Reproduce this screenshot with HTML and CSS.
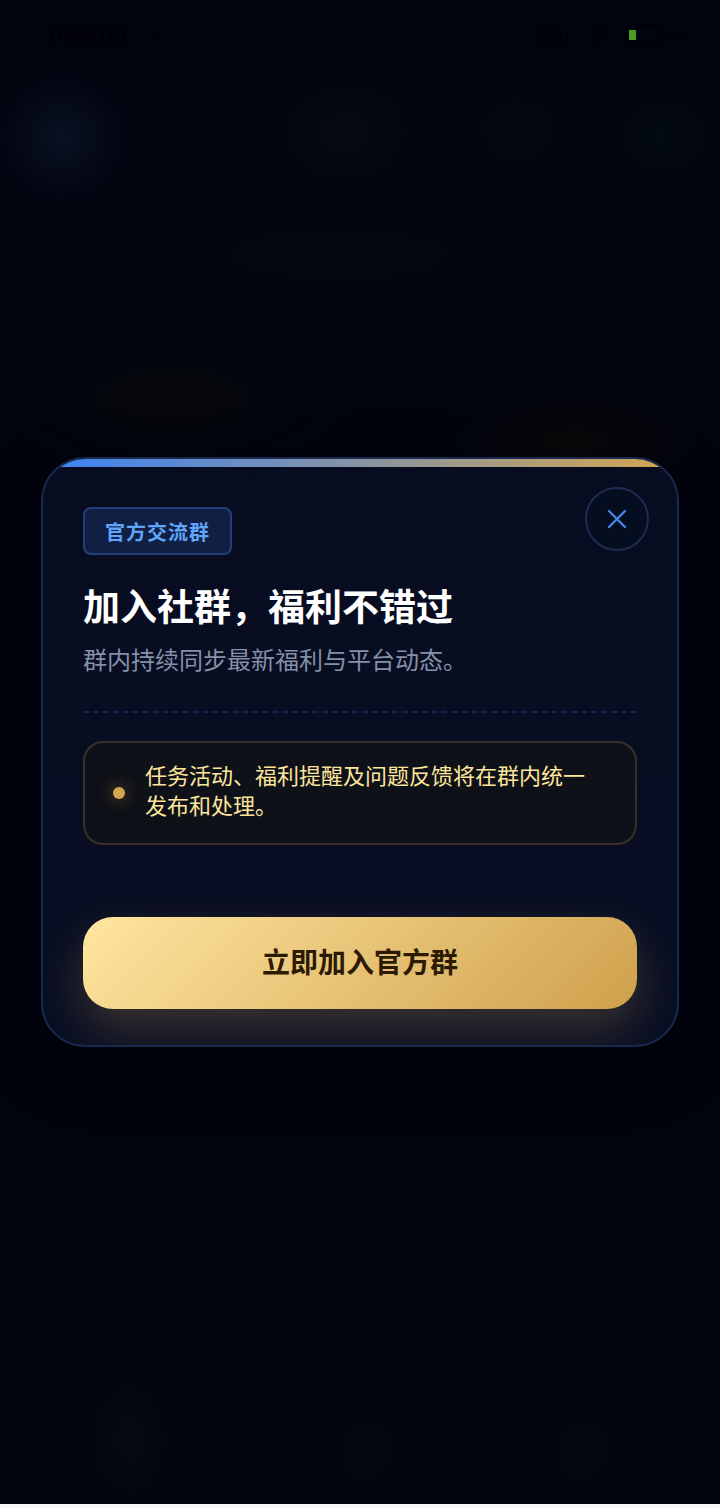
FILE: index.html
```html
<!DOCTYPE html>
<html lang="zh-CN">
<head>
  <meta charset="UTF-8" />
  <meta name="viewport" content="width=device-width, initial-scale=1.0" />
  <title>官方交流群</title>
  <link rel="stylesheet" href="styles.css">
</head>
<body>

  <div class="overlay">
    <header class="status-bar" aria-hidden="true">
      <svg class="status-left" width="116" height="24" viewBox="0 0 116 24">
        <path d="M0 2h78v4H0zM3 8h3v15H3zM11 8h3v12h-3zM18 10h28v10H18zM52 8h4v15h-4zM60 8h4v15h-4zM67 8h4v15h-4zM75 8h3v15h-3zM102 8h9v14z" />
      </svg>
      <div class="status-right">
        <svg width="32" height="24" viewBox="0 0 32 24">
          <path d="M0 2h20v4H0zM0 12h16v10H0zM19 7h3v16h-3zM25 7h3v16h-3z" />
        </svg>
        <svg width="20" height="24" viewBox="0 0 20 24">
          <path d="M2 3h15M2 8h14M5 14h10M2 20l14-6" class="stroke" />
        </svg>
        <svg width="64" height="24" viewBox="0 0 64 24">
          <rect x="2" y="3" width="38" height="18" rx="5" class="stroke" />
          <path d="M42 9h4v7h-4zM52 8h8l-4 10z" />
          <rect x="5" y="7" width="7" height="10" rx="1" class="battery-level" />
        </svg>
      </div>
    </header>

    <!-- Popup -->
    <main class="popup">
      <div class="popup-card">
        <div class="top-line"></div>
        <button class="close-btn" type="button" aria-label="关闭">
          <svg width="20" height="20" viewBox="0 0 20 20">
            <path d="M2 2L18 18M18 2L2 18" />
          </svg>
        </button>

        <span class="badge">官方交流群</span>
        <h1 class="title">加入社群，福利不错过</h1>
        <p class="subtitle">群内持续同步最新福利与平台动态。</p>

        <hr class="divider">

        <div class="notice">
          <span class="dot"></span>
          <p>任务活动、福利提醒及问题反馈将在群内统一发布和处理。</p>
        </div>

        <button class="join-btn" type="button">立即加入官方群</button>
      </div>
    </main>
  </div>

</body>
</html>
```

FILE: styles.css
```css
:root {
  --blue: #3b82f6;
  --gold: #d4a550;
  --card-border: #1a2950;
}

* {
  margin: 0;
  padding: 0;
  box-sizing: border-box;
}

body {
  background: #f4f6fa;
  font-family: "Noto Sans CJK SC", "Noto Sans", sans-serif;
}

.overlay {
  display: grid;
  grid-template-rows: 70px 1fr 70px;
  min-height: calc(100vh - 4px);
  background:
    radial-gradient(circle at 62px 138px, #0a1122 0, rgba(10, 17, 34, 0) 72px),
    radial-gradient(ellipse 100px 80px at 48% 132px, #060a10, transparent),
    radial-gradient(ellipse 70px 60px at 72% 130px, #040911, transparent),
    radial-gradient(ellipse 70px 60px at 92% 136px, #030a12, transparent),
    radial-gradient(ellipse 260px 60px at 47% 254px, #04080f, transparent),
    radial-gradient(ellipse 190px 80px at 24% 400px, #06080c, transparent),
    radial-gradient(ellipse 150px 60px at 80% 440px, #080809, transparent),
    radial-gradient(ellipse 60px 90px at 18% 1440px, #060a10, transparent),
    radial-gradient(ellipse 60px 70px at 51% 1450px, #020810, transparent),
    radial-gradient(ellipse 60px 70px at 81% 1450px, #020810, transparent),
    #01030e;
}

/* Status bar */
.status-bar {
  display: flex;
  justify-content: space-between;
  align-items: center;
  padding: 0 32px 0 48px;
}

.status-bar svg {
  fill: #010209;
}

.status-bar .stroke {
  fill: none;
  stroke: #010209;
  stroke-width: 3;
}

.status-bar .battery-level {
  fill: #4a9c22;
}

.status-right {
  display: flex;
  gap: 16px;
}

/* Popup */
.popup {
  display: flex;
  justify-content: center;
  align-items: center;
  padding: 0 41px;
}

.popup-card {
  position: relative;
  display: flex;
  flex-direction: column;
  align-items: flex-start;
  width: 100%;
  padding: 48px 40px 36px;
  border: 2px solid var(--card-border);
  border-radius: 44px;
  background: linear-gradient(180deg, #080c20, #080e24);
  box-shadow: 0 20px 60px rgba(0, 0, 0, 0.4);
  overflow: hidden;
}

.top-line {
  position: absolute;
  top: 0;
  left: 0;
  right: 0;
  height: 8px;
  background: linear-gradient(90deg, var(--blue), var(--gold));
}

.close-btn {
  position: absolute;
  top: 28px;
  right: 28px;
  display: flex;
  align-items: center;
  justify-content: center;
  width: 64px;
  height: 64px;
  border: 2px solid #1d2c50;
  border-radius: 50%;
  background: #050d20;
  cursor: pointer;
}

.close-btn svg {
  fill: none;
  stroke: #4685e6;
  stroke-width: 2.4;
  stroke-linecap: round;
}

.badge {
  padding: 2px 20px 0;
  border: 2px solid #233f77;
  border-radius: 8px;
  background: #102044;
  color: #60a5fa;
  font-size: 20px;
  font-weight: 700;
  line-height: 42px;
  letter-spacing: 1px;
}

.title {
  margin-top: 26px;
  color: #fff;
  font-size: 37px;
  font-weight: 700;
  line-height: 48px;
}

.subtitle {
  margin-top: 12px;
  color: #8490a8;
  font-size: 24px;
  line-height: 36px;
}

.divider {
  width: 100%;
  margin: 34px 0 28px;
  border: 0;
  border-top: 2px dashed #10264a;
}

.notice {
  display: flex;
  align-items: center;
  gap: 20px;
  width: 100%;
  padding: 16px 36px 16px 28px;
  border: 2px solid #3a302b;
  border-radius: 20px;
  background: #0f1118;
  color: #fde69c;
  font-size: 22px;
  line-height: 30px;
}

.notice p {
  padding-bottom: 8px;
}

.dot {
  flex: none;
  width: 12px;
  height: 12px;
  border-radius: 50%;
  background: var(--gold);
  box-shadow: 0 0 16px rgba(212, 165, 80, 0.5);
}

.join-btn {
  width: 100%;
  height: 92px;
  margin-top: 72px;
  padding-bottom: 4px;
  border: 0;
  border-radius: 30px;
  background: linear-gradient(135deg, #ffe6a0, #cfa04c);
  box-shadow: 0 20px 48px rgba(212, 165, 80, 0.25);
  color: #2c1a04;
  font-family: inherit;
  font-size: 28px;
  font-weight: 700;
  cursor: pointer;
}
```
